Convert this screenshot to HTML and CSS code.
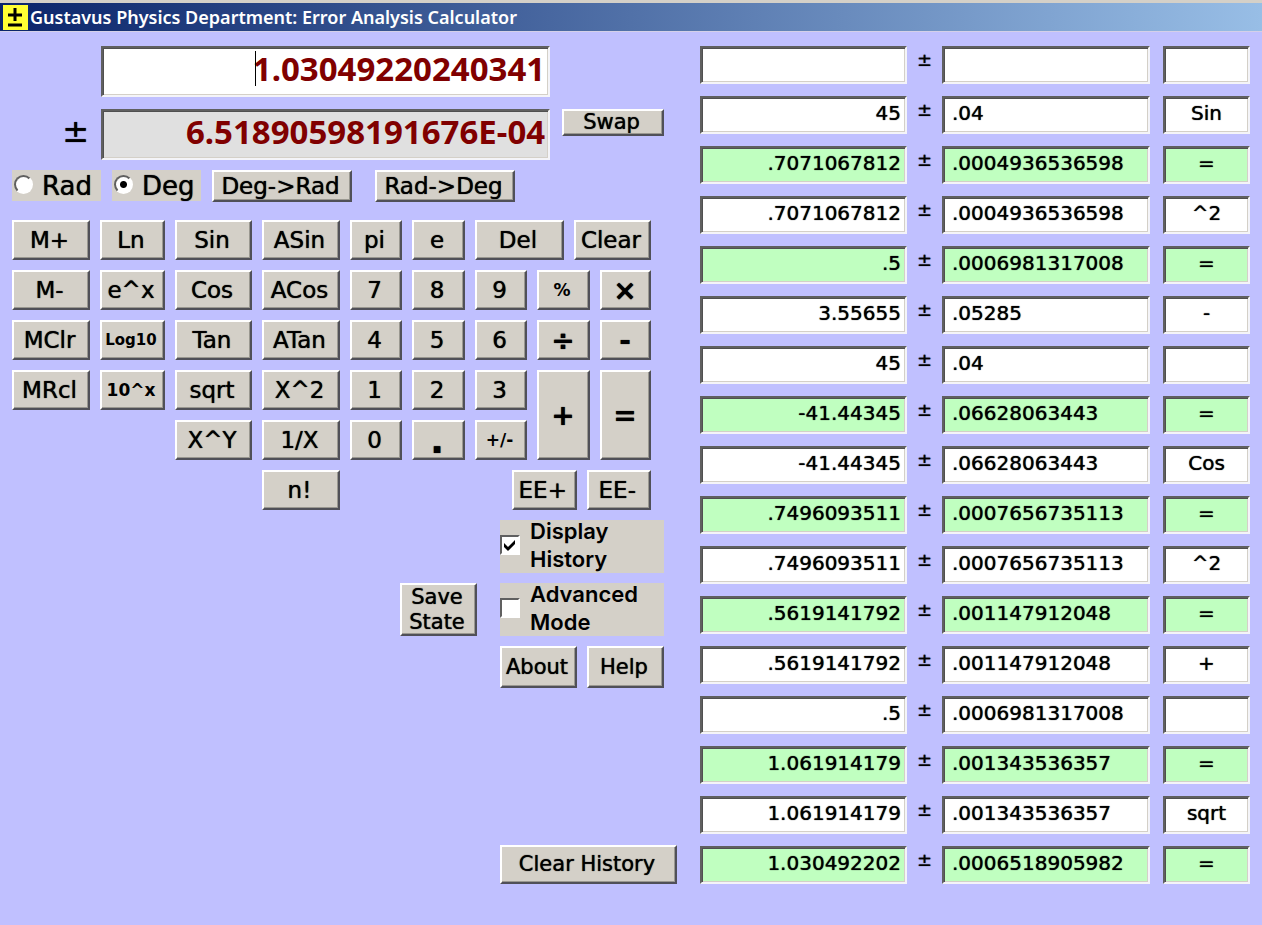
FILE: index.html
```html
<!DOCTYPE html>
<html lang="en">
<head>
    <meta charset="UTF-8">
    <meta name="viewport" content="width=device-width, initial-scale=1.0">
    <title>Gustavus Physics Department: Error Analysis Calculator</title>
    <link rel="stylesheet" href="styles.css">
</head>
<body>

    <!-- Title Bar -->
    <header class="title-bar">
        <svg class="app-icon" viewBox="0 0 25 25" aria-hidden="true">
            <rect width="25" height="25" fill="#ffff33"/>
            <path d="M12 3v13M5 10h14M5 20h14" stroke="#000" stroke-width="3" fill="none"/>
        </svg>
        <h1>Gustavus Physics Department: Error Analysis Calculator</h1>
    </header>

    <main class="window">

        <!-- Calculator -->
        <section class="calculator">
            <div class="displays">
                <div class="display-box">
                    <input type="text" class="display" aria-label="Value" value="1.03049220240341">
                    <span class="caret"></span>
                </div>
                <label class="pm-big" for="error">±</label>
                <input type="text" class="display error" id="error" value="6.51890598191676E-04" readonly>
                <button class="small swap">Swap</button>
            </div>

            <div class="angle-row">
                <label class="radio"><input type="radio" name="angle"> Rad</label>
                <label class="radio"><input type="radio" name="angle" checked> Deg</label>
                <button class="convert">Deg-&gt;Rad</button>
                <button class="convert last">Rad-&gt;Deg</button>
            </div>

            <div class="keypad">
                <button>M+</button>
                <button>Ln</button>
                <button>Sin</button>
                <button>ASin</button>
                <button>pi</button>
                <button>e</button>
                <div class="edit-keys">
                    <button>Del</button>
                    <button>Clear</button>
                </div>

                <button>M-</button>
                <button>e^x</button>
                <button>Cos</button>
                <button>ACos</button>
                <button>7</button>
                <button>8</button>
                <button>9</button>
                <button class="tiny">%</button>
                <button class="op">×</button>

                <button>MClr</button>
                <button class="log">Log10</button>
                <button>Tan</button>
                <button>ATan</button>
                <button>4</button>
                <button>5</button>
                <button>6</button>
                <button class="op">÷</button>
                <button class="op">-</button>

                <button>MRcl</button>
                <button class="tiny">10^x</button>
                <button>sqrt</button>
                <button>X^2</button>
                <button>1</button>
                <button>2</button>
                <button>3</button>
                <button class="op tall">+</button>
                <button class="op tall">=</button>

                <button class="col-sin">X^Y</button>
                <button>1/X</button>
                <button>0</button>
                <button class="dot">.</button>
                <button class="tiny">+/-</button>

                <button class="col-asin">n!</button>
                <div class="exp-keys">
                    <button>EE+</button>
                    <button>EE-</button>
                </div>
            </div>

            <!-- Options -->
            <div class="options">
                <label class="check"><input type="checkbox" checked> <span>Display History</span></label>
                <button class="small save">Save State</button>
                <label class="check"><input type="checkbox"> <span>Advanced Mode</span></label>
                <div class="help-keys">
                    <button class="small">About</button>
                    <button class="small">Help</button>
                </div>
            </div>

            <button class="small clear-history">Clear History</button>
        </section>

        <!-- History -->
        <section class="history">
            <div class="entry"><input aria-label="Value" value=""><span>±</span><input aria-label="Error" value=""><input aria-label="Operation" value=""></div>
            <div class="entry"><input aria-label="Value" value="45"><span>±</span><input aria-label="Error" value=".04"><input aria-label="Operation" value="Sin"></div>
            <div class="entry result"><input aria-label="Value" value=".7071067812"><span>±</span><input aria-label="Error" value=".0004936536598"><input aria-label="Operation" value="="></div>
            <div class="entry"><input aria-label="Value" value=".7071067812"><span>±</span><input aria-label="Error" value=".0004936536598"><input aria-label="Operation" value="^2"></div>
            <div class="entry result"><input aria-label="Value" value=".5"><span>±</span><input aria-label="Error" value=".0006981317008"><input aria-label="Operation" value="="></div>
            <div class="entry"><input aria-label="Value" value="3.55655"><span>±</span><input aria-label="Error" value=".05285"><input aria-label="Operation" value="-"></div>
            <div class="entry"><input aria-label="Value" value="45"><span>±</span><input aria-label="Error" value=".04"><input aria-label="Operation" value=""></div>
            <div class="entry result"><input aria-label="Value" value="-41.44345"><span>±</span><input aria-label="Error" value=".06628063443"><input aria-label="Operation" value="="></div>
            <div class="entry"><input aria-label="Value" value="-41.44345"><span>±</span><input aria-label="Error" value=".06628063443"><input aria-label="Operation" value="Cos"></div>
            <div class="entry result"><input aria-label="Value" value=".7496093511"><span>±</span><input aria-label="Error" value=".0007656735113"><input aria-label="Operation" value="="></div>
            <div class="entry"><input aria-label="Value" value=".7496093511"><span>±</span><input aria-label="Error" value=".0007656735113"><input aria-label="Operation" value="^2"></div>
            <div class="entry result"><input aria-label="Value" value=".5619141792"><span>±</span><input aria-label="Error" value=".001147912048"><input aria-label="Operation" value="="></div>
            <div class="entry"><input aria-label="Value" value=".5619141792"><span>±</span><input aria-label="Error" value=".001147912048"><input aria-label="Operation" value="+"></div>
            <div class="entry"><input aria-label="Value" value=".5"><span>±</span><input aria-label="Error" value=".0006981317008"><input aria-label="Operation" value=""></div>
            <div class="entry result"><input aria-label="Value" value="1.061914179"><span>±</span><input aria-label="Error" value=".001343536357"><input aria-label="Operation" value="="></div>
            <div class="entry"><input aria-label="Value" value="1.061914179"><span>±</span><input aria-label="Error" value=".001343536357"><input aria-label="Operation" value="sqrt"></div>
            <div class="entry result"><input aria-label="Value" value="1.030492202"><span>±</span><input aria-label="Error" value=".0006518905982"><input aria-label="Operation" value="="></div>
        </section>

    </main>

</body>
</html>
```
FILE: styles.css
```css
* {
    box-sizing: border-box;
}

body {
    margin: 0;
    background-color: #c0c0ff;
    color: #000;
    font-family: "DejaVu Sans", Verdana, sans-serif;
    font-size: 23px;
}

/* Title Bar */
.title-bar {
    display: flex;
    align-items: center;
    gap: 2px;
    height: 32px;
    padding-left: 3px;
    border-top: 3px solid #d4d0c8;
    border-bottom: 1px solid #d4d0e8;
    background: linear-gradient(to right, #0a246a, #98bee6);
}

.app-icon {
    width: 25px;
    height: 25px;
}

.title-bar h1 {
    margin: 0;
    color: white;
    font-family: "Noto Sans", Tahoma, sans-serif;
    font-size: 18px;
    font-weight: 600;
    line-height: 24px;
}

.window {
    display: grid;
    grid-template-columns: 665fr 550fr;
    gap: 23px;
    padding: 14px 12px;
}

/* Buttons */
button {
    min-width: 0;
    padding: 0 3px 0 0;
    border: 2px solid;
    border-color: #fff #505058 #505058 #fff;
    background-color: #d4d0c8;
    box-shadow: inset -1px -1px #9a9890;
    color: #000;
    font-family: inherit;
    font-size: 23px;
    line-height: 25px;
    text-shadow: 0 0 1px #000;
    white-space: nowrap;
}

button.small {
    font-size: 21px;
}

/* Text Boxes */
input[type="text"],
.entry input {
    min-width: 0;
    width: 100%;
    border: 2px solid;
    border-color: #606060 #f4f4f8 #f4f4f8 #606060;
    border-radius: 0;
    background-color: white;
    box-shadow: inset 1px 1px #505050, inset -1px -1px #d4d0c8;
    font-family: inherit;
    outline: none;
}

/* Calculator */
.calculator {
    display: flex;
    flex-direction: column;
}

.displays {
    display: grid;
    grid-template-columns: 77px 450fr 102fr;
    gap: 12px;
    padding-right: 13px;
}

.display-box {
    grid-column: 2;
    position: relative;
    display: flex;
}

.displays .display {
    height: 51px;
    padding: 0 3px 6px;
    color: #800000;
    font-family: "Noto Sans", Tahoma, sans-serif;
    font-size: 33px;
    font-weight: bold;
    text-align: right;
}

.displays .error {
    background-color: #e0e0e0;
}

/* Text cursor in front of the value */
.caret {
    position: absolute;
    top: 5px;
    right: 294px;
    width: 1px;
    height: 35px;
    background-color: #000;
}

.pm-big {
    grid-column: 1;
    font-size: 32px;
    line-height: 44px;
    text-align: right;
    text-shadow: 0 0 1px #000;
}

.swap {
    height: 27px;
    line-height: 21px;
}

/* Angle Units */
.angle-row {
    display: flex;
    gap: 11px;
    margin-top: 10px;
}

.radio {
    display: flex;
    align-items: center;
    gap: 9px;
    width: 89px;
    height: 31px;
    background-color: #d4d0c8;
    font-size: 26px;
    line-height: 30px;
    text-shadow: 0 0 1px #000;
}

.radio input {
    appearance: none;
    flex: none;
    width: 19px;
    height: 19px;
    margin: 0 0 3px 2px;
    border: 2px solid;
    border-color: #606060 #fff #fff #606060;
    border-radius: 50%;
    background-color: white;
}

.radio input:checked {
    background-image: radial-gradient(circle, #000 3px, transparent 4px);
}

.convert {
    width: 140px;
    height: 32px;
}

.convert.last {
    margin-left: 12px;
}

/* Keypad */
.keypad {
    display: grid;
    grid-template-columns: 78fr 65fr 77fr 78fr 52fr 53fr 52fr 53fr 51fr;
    grid-auto-rows: 40px;
    gap: 10px;
    margin-top: 18px;
    padding-right: 26px;
}

.keypad .tall {
    grid-row: span 2;
}

.keypad .col-sin {
    grid-column: 3;
}

.keypad .col-asin {
    grid-column: 4;
}

.edit-keys,
.exp-keys {
    grid-column: 7 / 10;
    display: grid;
    grid-template-columns: 89fr 77fr;
    gap: 10px;
}

.exp-keys {
    grid-template-columns: 65fr 65fr;
    padding-left: 37px;
}

.keypad .op {
    padding-right: 1px;
    font-size: 28px;
    font-weight: bold;
}

.keypad .log {
    font-size: 15px;
    font-weight: bold;
    text-shadow: none;
}

.keypad .tiny {
    font-size: 17px;
    font-weight: bold;
    text-shadow: none;
}

.keypad .dot {
    font-size: 36px;
    font-weight: bold;
}

/* Options */
.options {
    display: grid;
    grid-template-columns: 77px 164px;
    justify-content: end;
    gap: 10px 23px;
    margin-top: 10px;
    padding-right: 13px;
}

.save {
    height: 53px;
    white-space: normal;
}

.check {
    grid-column: 2;
    display: flex;
    align-items: center;
    gap: 10px;
    height: 53px;
    padding-bottom: 3px;
    background-color: #d4d0c8;
    font-family: Inter, Arial, sans-serif;
    font-size: 22px;
    font-weight: 600;
    line-height: 28px;
}

.check input {
    appearance: none;
    flex: none;
    width: 20px;
    height: 20px;
    margin: 0;
    border: 2px solid;
    border-color: #606060 #fff #fff #606060;
    background-color: white;
}

.check input:checked {
    background-image: url("data:image/svg+xml,%3Csvg xmlns='http://www.w3.org/2000/svg' viewBox='0 0 16 16'%3E%3Cpath d='M2 6l4 4 7-7v4l-7 7-4-4z'/%3E%3C/svg%3E");
}

.help-keys {
    grid-column: 2;
    display: grid;
    grid-template-columns: 1fr 1fr;
    gap: 10px;
    height: 42px;
}

.clear-history {
    align-self: flex-end;
    width: 177px;
    height: 39px;
    margin-top: auto;
}

/* History */
.history {
    display: grid;
    gap: 12px;
}

.entry {
    display: grid;
    grid-template-columns: 207fr 35px 208fr 13px 87fr;
    text-shadow: 0 0 1px #000;
}

.entry input {
    height: 38px;
    padding: 0 4px 4px;
    font-size: 20px;
    text-align: right;
    text-shadow: 0 0 1px #000;
}

.entry span {
    font-size: 18px;
    line-height: 28px;
    text-align: center;
}

.entry span + input {
    padding-left: 8px;
    text-align: left;
}

.entry input:last-child {
    grid-column: 5;
    text-align: center;
}

.result input {
    background-color: #c0ffc0;
}
```
